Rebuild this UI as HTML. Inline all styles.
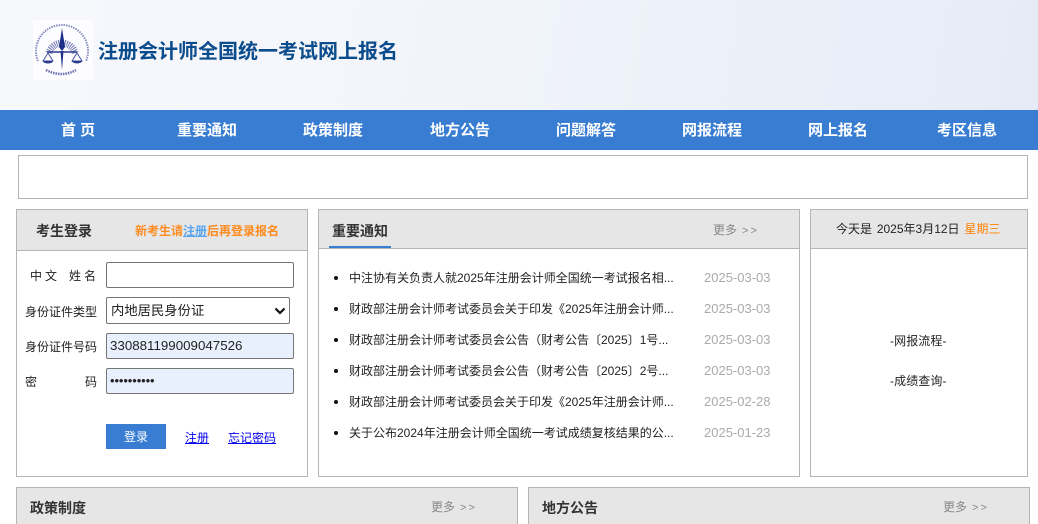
<!DOCTYPE html>
<html lang="zh"><head><meta charset="utf-8"><title>注册会计师全国统一考试网上报名</title>
<style>
*{box-sizing:border-box}
html,body{margin:0;padding:0;width:1038px;height:524px;overflow:hidden;background:#fff}
body{position:relative;font:12px/16px "Liberation Sans","WenQuanYi Zen Hei","Noto Sans CJK SC",sans-serif;color:#222}
.a{position:absolute;white-space:nowrap}
.box{position:absolute;border:1px solid #b5b5b5;background:#fff}
.hd{position:absolute;left:0;top:0;right:0;background:#e6e6e6;border-bottom:1px solid #b5b5b5}
.nav{position:absolute;left:0;top:110px;width:1038px;height:40px;background:#387dd2}
.nav span{position:absolute;top:12px;line-height:17px;font-size:15px;font-weight:bold;color:#fff;white-space:nowrap}
.t{font-size:14px;font-weight:bold;color:#333;line-height:18px}
.more{font-size:12px;color:#888;line-height:16px}
.more i{font-style:normal;font-size:11px;letter-spacing:2px;margin-left:5px}
.lab{position:absolute;font-size:12px;line-height:16px;color:#222;white-space:nowrap}
.inp{position:absolute;left:106px;width:188px;height:26px;border:1px solid #767676;border-radius:2px;background:#fff;font-size:13.33px;line-height:24px;padding-left:3px;color:#222;white-space:nowrap}
.fill{background:#e8f0fe}
.li{position:absolute;left:349px;font-size:12px;line-height:16px;color:#222;white-space:nowrap}
.dot{position:absolute;left:334px;width:4px;height:4px;border-radius:50%;background:#111}
.d{position:absolute;left:704px;font-size:13px;line-height:16px;color:#aaa;white-space:nowrap}
</style></head><body>
<div class="a" style="left:0;top:0;width:1038px;height:110px;background:linear-gradient(100deg,#f7f8fc 0%,#f4f6fb 30%,#e5ecf7 100%)"></div>
<div class="a" style="left:33px;top:20px;width:60px;height:60px;background:#fdfdff">
<svg width="60" height="60" viewBox="0 0 60 60">
<path d="M5 41A26 26 0 1 1 53 41" fill="none" stroke="#6a70b0" stroke-width="2" stroke-dasharray="1.500 1" opacity=".8"/>
<path d="M16 33A13.500 13.500 0 0 1 42 33" fill="none" stroke="#4a52a0" stroke-width="7" stroke-dasharray="1 1" opacity=".75"/>
<path d="M29 8L32 27L29 31L26 27Z" fill="#1d2f86"/>
<path d="M27.500 31H30.500L29 50Z" fill="#1d2f86"/>
<path d="M14 32H44" stroke="#2a3a8e" stroke-width="1.500"/>
<path d="M15 33L10 41H20ZM44 33L39 41H49Z" fill="none" stroke="#3a4a9e" stroke-width=".9"/>
<path d="M10 41A5 2.500 0 0 0 20 41ZM39 41A5 2.500 0 0 0 49 41Z" fill="#2a3a8e"/>
<path d="M13 50Q29 58 43 50" fill="none" stroke="#6a70b0" stroke-width="2.500" stroke-dasharray="1.500 1"/>
</svg></div>
<div class="a" style="left:98px;top:39px;font-size:20px;line-height:26px;font-weight:bold;color:#0b4c8c">注册会计师全国统一考试网上报名</div>
<div class="nav">
<span style="left:61px">首 页</span><span style="left:177px">重要通知</span><span style="left:303px">政策制度</span><span style="left:430px">地方公告</span><span style="left:556px">问题解答</span><span style="left:682px">网报流程</span><span style="left:808px">网上报名</span><span style="left:937px">考区信息</span>
</div>
<div class="box" style="left:18px;top:155px;width:1010px;height:44px"></div>

<div class="box" style="left:16px;top:209px;width:292px;height:268px"><div class="hd" style="height:41px"></div></div>
<div class="a t" style="left:36px;top:222px">考生登录</div>
<div class="a" style="left:135px;top:222px;font-size:12px;line-height:18px;font-weight:bold;color:#ff8a1e">新考生请<span style="color:#5aa5ee;text-decoration:underline">注册</span>后再登录报名</div>
<div class="lab" style="left:30px;top:268px;letter-spacing:3px">中文</div>
<div class="lab" style="left:69px;top:268px;letter-spacing:3px">姓名</div>
<div class="lab" style="left:25px;top:304px">身份证件类型</div>
<div class="lab" style="left:25px;top:339px">身份证件号码</div>
<div class="lab" style="left:25px;top:374px">密</div><div class="lab" style="left:85px;top:374px">码</div>
<div class="inp" style="top:262px"></div>
<div class="inp" style="top:297px;width:184px;height:27px;line-height:25px;padding-left:4px">内地居民身份证
<svg style="position:absolute;right:3px;top:9px" width="12" height="8" viewBox="0 0 12 8"><path d="M1.500 1.500L6 6L10.500 1.500" fill="none" stroke="#111" stroke-width="2.200"/></svg></div>
<div class="inp fill" style="top:333px">330881199009047526</div>
<div class="inp fill" style="top:368px;font-size:13px;letter-spacing:-.1px">••••••••••</div>
<div class="a" style="left:106px;top:424px;width:60px;height:25px;background:#387dd2;color:#fff;text-align:center;line-height:26px;font-size:12px">登录</div>
<div class="a" style="left:185px;top:430px;color:#0000ee;text-decoration:underline">注册</div>
<div class="a" style="left:228px;top:430px;color:#0000ee;text-decoration:underline">忘记密码</div>

<div class="box" style="left:318px;top:209px;width:482px;height:268px"><div class="hd" style="height:39px"></div></div>
<div class="a" style="left:329px;top:246px;width:62px;height:2px;background:#387dd2"></div>
<div class="a t" style="left:332px;top:222px">重要通知</div>
<div class="a more" style="left:713px;top:222px">更多<i>&gt;&gt;</i></div>
<div class="dot" style="top:276px"></div><div class="li" style="top:270px">中注协有关负责人就2025年注册会计师全国统一考试报名相...</div><div class="d" style="top:270px">2025-03-03</div>
<div class="dot" style="top:307px"></div><div class="li" style="top:301px">财政部注册会计师考试委员会关于印发《2025年注册会计师...</div><div class="d" style="top:301px">2025-03-03</div>
<div class="dot" style="top:338px"></div><div class="li" style="top:332px">财政部注册会计师考试委员会公告（财考公告〔2025〕1号...</div><div class="d" style="top:332px">2025-03-03</div>
<div class="dot" style="top:369px"></div><div class="li" style="top:363px">财政部注册会计师考试委员会公告（财考公告〔2025〕2号...</div><div class="d" style="top:363px">2025-03-03</div>
<div class="dot" style="top:400px"></div><div class="li" style="top:394px">财政部注册会计师考试委员会关于印发《2025年注册会计师...</div><div class="d" style="top:394px">2025-02-28</div>
<div class="dot" style="top:431px"></div><div class="li" style="top:425px">关于公布2024年注册会计师全国统一考试成绩复核结果的公...</div><div class="d" style="top:425px">2025-01-23</div>

<div class="box" style="left:810px;top:209px;width:218px;height:268px"><div class="hd" style="height:39px"></div></div>
<div class="a" style="left:836px;top:221px;line-height:16px;color:#222;word-spacing:1.500px">今天是 2025年3月12日 <span style="color:#ff8000">星期三</span></div>
<div class="a" style="left:890px;top:333px;color:#222;letter-spacing:.1px">-网报流程-</div>
<div class="a" style="left:890px;top:373px;color:#222;letter-spacing:.1px">-成绩查询-</div>

<div class="box" style="left:16px;top:487px;width:502px;height:60px;background:#e6e6e6"></div>
<div class="a t" style="left:30px;top:499px">政策制度</div>
<div class="a more" style="left:431px;top:499px">更多<i>&gt;&gt;</i></div>
<div class="box" style="left:528px;top:487px;width:502px;height:60px;background:#e6e6e6"></div>
<div class="a t" style="left:542px;top:499px">地方公告</div>
<div class="a more" style="left:943px;top:499px">更多<i>&gt;&gt;</i></div>
</body></html>
